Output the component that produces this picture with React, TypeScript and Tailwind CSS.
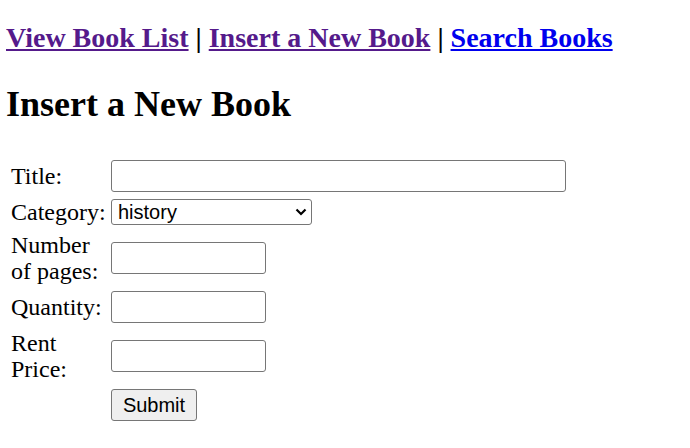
export default function App() {
  const label = "w-[100px] shrink-0";
  const field =
    "h-[32px] border border-[#767676] rounded-[3px] bg-white px-[3px] text-[20px] font-['Liberation_Sans',Arial,sans-serif]";

  return (
    <div className="min-h-screen bg-white text-black px-[6px] font-['Liberation_Serif','Times_New_Roman',serif]">
      {/* NAV */}
      <h3 className="pt-[22px] text-[28px] font-bold leading-[31px]">
        <a href="#" className="text-[#551a8b] underline">View Book List</a> |{" "}
        <a href="#" className="text-[#551a8b] underline">Insert a New Book</a> |{" "}
        <a href="#" className="text-[#0000ee] underline">Search Books</a>
      </h3>

      <h2 className="mt-[31px] text-[36px] font-bold leading-[40px]">Insert a New Book</h2>

      {/* FORM */}
      <form className="mt-[36px] pl-[5px] flex flex-col gap-[7px] text-[24px] leading-[26px]">
        <div className="flex items-center">
          <label className={label}>Title:</label>
          <input type="text" className={`${field} w-[455px]`} />
        </div>

        <div className="flex items-center">
          <label className={label}>Category:</label>
          <div className="relative flex">
            <select
              defaultValue="history"
              className="appearance-none w-[201px] h-[26px] border border-[#767676] rounded-[3px] bg-white pl-[6px] text-[20px] leading-[24px] font-['Liberation_Sans',Arial,sans-serif]"
            >
              <option value="history">history</option>
              <option value="novel">novel</option>
              <option value="science">science</option>
            </select>
            <svg
              className="pointer-events-none absolute right-[5px] top-[9px]"
              width="12"
              height="8"
              viewBox="0 0 12 8"
            >
              <path d="M1.5 1.5 L6 6 L10.5 1.5" fill="none" stroke="#000" strokeWidth="2.2" />
            </svg>
          </div>
        </div>

        <div className="flex items-center">
          <label className={label}>Number of pages:</label>
          <input type="text" className={`${field} w-[155px]`} />
        </div>

        <div className="flex items-center">
          <label className={label}>Quantity:</label>
          <input type="text" className={`${field} w-[155px]`} />
        </div>

        <div className="flex items-center">
          <label className={label}>Rent Price:</label>
          <input type="text" className={`${field} w-[155px]`} />
        </div>

        <div className="flex items-center">
          <span className={label}></span>
          <button
            type="button"
            className="w-[86px] h-[32px] border border-[#767676] rounded-[3px] bg-[#efefef] text-[20px] font-['Liberation_Sans',Arial,sans-serif]"
          >
            Submit
          </button>
        </div>
      </form>
    </div>
  );
}
